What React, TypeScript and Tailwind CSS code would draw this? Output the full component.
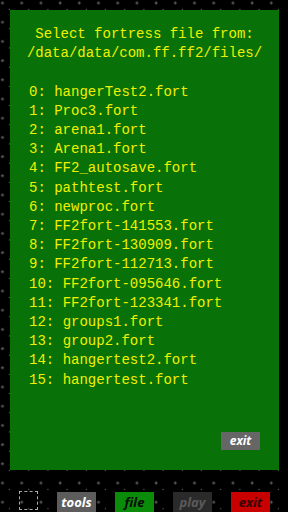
import React from 'react';

const files = [
  'hangerTest2.fort',
  'Proc3.fort',
  'arena1.fort',
  'Arena1.fort',
  'FF2_autosave.fort',
  'pathtest.fort',
  'newproc.fort',
  'FF2fort-141553.fort',
  'FF2fort-130909.fort',
  'FF2fort-112713.fort',
  'FF2fort-095646.fort',
  'FF2fort-123341.fort',
  'groups1.fort',
  'group2.fort',
  'hangertest2.fort',
  'hangertest.fort',
];

function Backdrop() {
  return (
    <svg className="absolute inset-0" width="288" height="512">
      <defs>
        <pattern id="grid" x="-0.5" y="-0.5" width="19.2" height="19.2" patternUnits="userSpaceOnUse">
          <path d="M3 2v3M1.5 3.5h3" stroke="#6a6a6a" strokeWidth="1" />
          <rect x="9.5" y="9.5" width="1" height="1" fill="#7a7a7a" />
        </pattern>
      </defs>
      <rect width="288" height="512" fill="url(#grid)" />
    </svg>
  );
}

export default function App() {
  return (
    <div className="relative w-[288px] h-[512px] bg-black overflow-hidden">
      <Backdrop />

      <div className="relative flex flex-col">
        <div className="ml-[10px] mt-[10px] w-[269px] h-[460px] bg-[#087208] pt-[15px] font-['Liberation_Mono',monospace] text-[14px] leading-[19.2px] text-[#f0f000] flex flex-col">
          <div className="text-center">Select fortress file from:</div>
          <div className="text-center">/data/data/com.ff.ff2/files/</div>
          <div className="h-[19.2px]" />
          <ul className="pl-[19px]">
            {files.map((f, i) => (
              <li key={f} className="whitespace-pre">
                {i}: {f}
              </li>
            ))}
          </ul>
          <div className="flex-1" />
          <div className="flex justify-end pr-[19px] pb-[20px]">
            <button className="w-[39px] h-[18px] bg-[#666666] text-white font-['Open_Sans',sans-serif] font-bold italic text-[12px] leading-[18px]">
              exit
            </button>
          </div>
        </div>

        <div className="mt-[22px] flex items-start pl-[19px] gap-[19px] font-['Open_Sans',sans-serif] font-bold italic text-[13px]">
          <div className="w-[19px] h-[19px] -mt-[1px] border border-dashed border-[#aaaaaa]" />
          <button className="w-[39px] h-[20px] bg-[#5c5c5c] text-white leading-[20px]">tools</button>
          <button className="w-[39px] h-[20px] bg-[#0a8c0a] text-[#0a0a0a] leading-[20px]">file</button>
          <button className="w-[39px] h-[20px] bg-[#2a2a2a] text-[#5a5a5a] leading-[20px]">play</button>
          <button className="w-[39px] h-[20px] bg-[#c80000] text-[#3a0000] leading-[20px]">exit</button>
        </div>
      </div>
    </div>
  );
}
